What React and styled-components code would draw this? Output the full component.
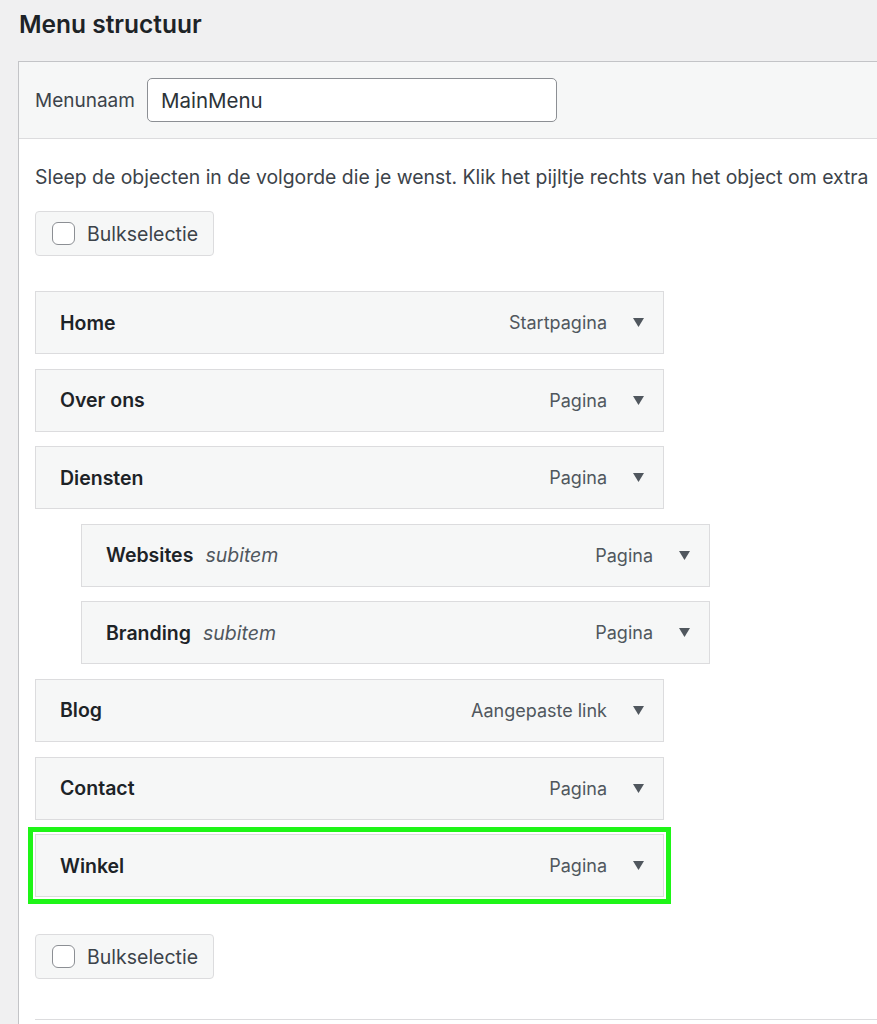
import React from "react"
import styled, { createGlobalStyle } from "styled-components"

const GlobalStyle = createGlobalStyle`
  html, body {
    margin: 0;
    padding: 0;
    background: #f0f0f1;
    overflow: hidden;
  }
  body {
    font-family: Inter, "Noto Sans", sans-serif;
    color: #3c434a;
  }
`

const items = [
  { title: "Home", type: "Startpagina" },
  { title: "Over ons", type: "Pagina" },
  { title: "Diensten", type: "Pagina" },
  { title: "Websites", type: "Pagina", sub: true },
  { title: "Branding", type: "Pagina", sub: true },
  { title: "Blog", type: "Aangepaste link" },
  { title: "Contact", type: "Pagina" },
  { title: "Winkel", type: "Pagina", highlight: true },
]

function Arrow() {
  return (
    <ArrowIcon viewBox="0 0 11 9" aria-hidden="true">
      <path d="M0 0 H11 L5.5 9 Z" fill="#50575e" />
    </ArrowIcon>
  )
}

function BulkButton() {
  return (
    <Bulk>
      <CheckBox />
      <span>Bulkselectie</span>
    </Bulk>
  )
}

function App() {
  return (
    <Page>
      <GlobalStyle />
      <Title>Menu structuur</Title>
      <Panel>
        <Header>
          <Label>Menunaam</Label>
          <NameInput defaultValue="MainMenu" />
        </Header>
        <Body>
          <Hint>
            Sleep de objecten in de volgorde die je wenst. Klik het pijltje rechts van het object om extra
          </Hint>
          <BulkButton />
          <MenuList>
            {items.map((item) => (
              <ItemWrap key={item.title} $sub={item.sub} $highlight={item.highlight}>
                <Item>
                  <ItemTitle>
                    {item.title}
                    {item.sub && <SubLabel>subitem</SubLabel>}
                  </ItemTitle>
                  <ItemType>{item.type}</ItemType>
                  <Arrow />
                </Item>
              </ItemWrap>
            ))}
          </MenuList>
          <BulkButton />
          <Footer />
        </Body>
      </Panel>
    </Page>
  )
}

export default App

const Page = styled.div`
  width: 1100px;
  padding-left: 18px;
`

const Title = styled.h2`
  margin: 0;
  height: 61px;
  display: flex;
  align-items: center;
  padding-left: 1px;
  padding-bottom: 14px;
  box-sizing: border-box;
  font-size: 24.5px;
  font-weight: 600;
  color: #1d2327;
`

const Panel = styled.div`
  border: 1px solid #c3c4c7;
  background: #fff;
`

const Header = styled.div`
  background: #f6f7f7;
  border-bottom: 1px solid #dcdcde;
  padding: 16px 16px;
  display: flex;
  align-items: center;
  gap: 12px;
`

const Label = styled.label`
  font-size: 19px;
  color: #3c434a;
`

const NameInput = styled.input`
  width: 410px;
  height: 44px;
  box-sizing: border-box;
  border: 1px solid #8c8f94;
  border-radius: 5px;
  background: #fff;
  padding: 0 13px;
  font-family: inherit;
  font-size: 20.5px;
  color: #2c3338;
  outline: none;
`

const Body = styled.div`
  padding: 26px 16px 0;
`

const Hint = styled.p`
  margin: 0 0 22px;
  font-size: 19.4px;
  line-height: 24px;
  white-space: nowrap;
  color: #3c434a;
`

const Bulk = styled.div`
  width: 179px;
  height: 45px;
  box-sizing: border-box;
  display: flex;
  align-items: center;
  gap: 12px;
  padding-left: 16px;
  background: #f6f7f7;
  border: 1px solid #dcdcde;
  border-radius: 4px;
  font-size: 19.5px;
  color: #3c434a;
`

const CheckBox = styled.span`
  width: 23px;
  height: 23px;
  box-sizing: border-box;
  border: 1.5px solid #8c8f94;
  border-radius: 6px;
  background: #fff;
`

const MenuList = styled.div`
  display: flex;
  flex-direction: column;
  gap: 14.6px;
  margin: 35px 0 37px;
`

const ItemWrap = styled.div`
  width: 629px;
  margin-left: ${({ $sub }) => ($sub ? "46px" : "0")};
  outline: ${({ $highlight }) => ($highlight ? "5px solid #1ef517" : "none")};
  outline-offset: 2px;
`

const Item = styled.div`
  height: 63px;
  box-sizing: border-box;
  display: flex;
  align-items: center;
  padding: 0 19px 0 24px;
  background: #f6f7f7;
  border: 1px solid #dcdcde;
`

const ItemTitle = styled.div`
  flex: 1;
  font-size: 19.5px;
  font-weight: 600;
  color: #1d2327;
`

const SubLabel = styled.span`
  margin-left: 12px;
  font-weight: 400;
  font-style: italic;
  color: #50575e;
`

const ItemType = styled.span`
  font-size: 18px;
  color: #50575e;
`

const ArrowIcon = styled.svg`
  width: 11px;
  height: 9px;
  margin-left: 26px;
`

const Footer = styled.div`
  margin-top: 40px;
  border-top: 1px solid #dcdcde;
  height: 20px;
`
